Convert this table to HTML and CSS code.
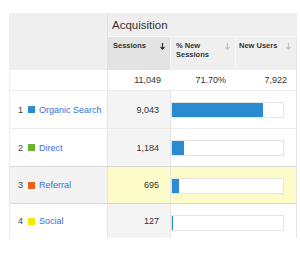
FILE: index.html
```html
<!DOCTYPE html>
<html>
<head>
<meta charset="utf-8">
<link rel="stylesheet" href="styles.css">
</head>
<body>
<div class="page">
  <div class="table">
    <div class="hcell blank"></div>
    <div class="hcell group">Acquisition</div>

    <div class="hcell sub sorted"><span class="lbl">Sessions</span><svg class="arrow dark" width="5" height="7" viewBox="0 0 5 7"><path d="M2.5 0V6M0.5 4L2.5 6.2L4.5 4" fill="none" stroke="currentColor" stroke-width="1.2"/></svg></div>
    <div class="hcell sub"><span class="lbl">% New<br>Sessions</span><svg class="arrow" width="5" height="7" viewBox="0 0 5 7"><path d="M2.5 0V6M0.5 4L2.5 6.2L4.5 4" fill="none" stroke="currentColor" stroke-width="1.2"/></svg></div>
    <div class="hcell sub last"><span class="lbl">New Users</span><svg class="arrow" width="5" height="7" viewBox="0 0 5 7"><path d="M2.5 0V6M0.5 4L2.5 6.2L4.5 4" fill="none" stroke="currentColor" stroke-width="1.2"/></svg></div>

    <div class="cell total label"></div>
    <div class="cell total num">11,049</div>
    <div class="cell total num">71.70%</div>
    <div class="cell total num last">7,922</div>

    <div class="cell label r1"><span class="idx">1</span><span class="sq blue"></span><span class="link">Organic Search</span></div>
    <div class="cell num sess r1">9,043</div>
    <div class="cell bar r1"><div class="track"><div class="fill" style="width:81.85%"></div></div></div>

    <div class="cell label r2"><span class="idx">2</span><span class="sq green"></span><span class="link">Direct</span></div>
    <div class="cell num sess r2">1,184</div>
    <div class="cell bar r2"><div class="track"><div class="fill" style="width:10.72%"></div></div></div>

    <div class="cell label r3 hl"><span class="idx">3</span><span class="sq orange"></span><span class="link">Referral</span></div>
    <div class="cell num sess r3 hl">695</div>
    <div class="cell bar r3 hl"><div class="track"><div class="fill" style="width:6.29%"></div></div></div>

    <div class="cell label r4"><span class="idx">4</span><span class="sq yellow"></span><span class="link">Social</span></div>
    <div class="cell num sess r4">127</div>
    <div class="cell bar r4"><div class="track"><div class="fill" style="width:1.15%"></div></div></div>
  </div>
</div>
</body>
</html>
```

FILE: styles.css
```css
html, body {
  margin: 0;
  padding: 0;
  background: #ffffff;
}
.page {
  padding: 13px 0 0 9px;
  font-family: "Liberation Sans", Arial, sans-serif;
  color: #333333;
}
.table {
  display: grid;
  grid-template-columns: 99px 63px 65px 61px;
  grid-template-rows: 24px 33px 21px 38px 37px 38px 34px;
  width: 288px;
}
.hcell {
  background: #efefef;
  box-sizing: border-box;
}
.blank {
  grid-row: 1 / span 2;
  border-right: 1px solid #e2e2e2;
}
.group {
  grid-column: 2 / span 3;
  display: flex;
  align-items: center;
  padding-left: 4px;
  font-size: 11.5px;
  color: #333;
  border-bottom: 1px solid #f8f8f8;
}
.sub {
  display: flex;
  justify-content: space-between;
  align-items: flex-start;
  padding: 5px 5px 0 5px;
  border-right: 1px solid #f8f8f8;
}
.sub.last {
  padding-left: 3px;
  border-right: 1px solid #e6e6e6;
}
.sub.sorted {
  background: #e3e3e3;
}
.lbl {
  font-size: 7.5px;
  font-weight: bold;
  line-height: 8.5px;
  color: #333;
}
.arrow {
  color: #c4c4c4;
  margin-top: 1px;
}
.arrow.dark {
  color: #333;
}
.cell {
  box-sizing: border-box;
  display: flex;
  align-items: center;
  font-size: 9px;
  color: #333;
  border-bottom: 1px solid #ececec;
  border-right: 1px solid #e6e6e6;
}
.num {
  justify-content: flex-end;
  padding-right: 10px;
}
.total.num.last {
  padding-right: 9px;
}
.total {
  background: #fff;
  border-right: none;
}
.total.label {
  border-right: 1px solid #e6e6e6;
}
.total.last {
  border-right: 1px solid #e6e6e6;
}
.label {
  padding-left: 8px;
  border-left: 1px solid #ececec;
  background: #fff;
}
.idx {
  color: #444;
  margin-right: 5px;
}
.sq {
  width: 7px;
  height: 7px;
  margin-right: 4px;
}
.blue { background: #2a8bd3; }
.green { background: #66b52a; }
.orange { background: #ea6219; }
.yellow { background: #f2ea06; }
.link {
  color: #3a6fd8;
}
.sess {
  background: #f4f4f4;
  padding-right: 11px;
}
.bar {
  grid-column: 3 / span 2;
  padding-right: 12px;
  background: #fff;
}
.track {
  width: 115px;
  height: 16px;
  box-sizing: border-box;
  border: 1px solid #e4e4e4;
  background: #fff;
  display: flex;
}
.fill {
  background: #2a8bd3;
  height: 100%;
}
.r3 .track {
  margin-top: 2px;
}
.r4 .track {
  margin-top: 3px;
}
.hl {
  background: #fdfbc8;
  border-top: 1px solid #d8d8d8;
  border-bottom: 1px solid #d8d8d8;
}
.label.hl {
  background: #f3f3f3;
}
.r2 {
  border-bottom: none;
}
.r4 {
  border-bottom: none;
}
```
